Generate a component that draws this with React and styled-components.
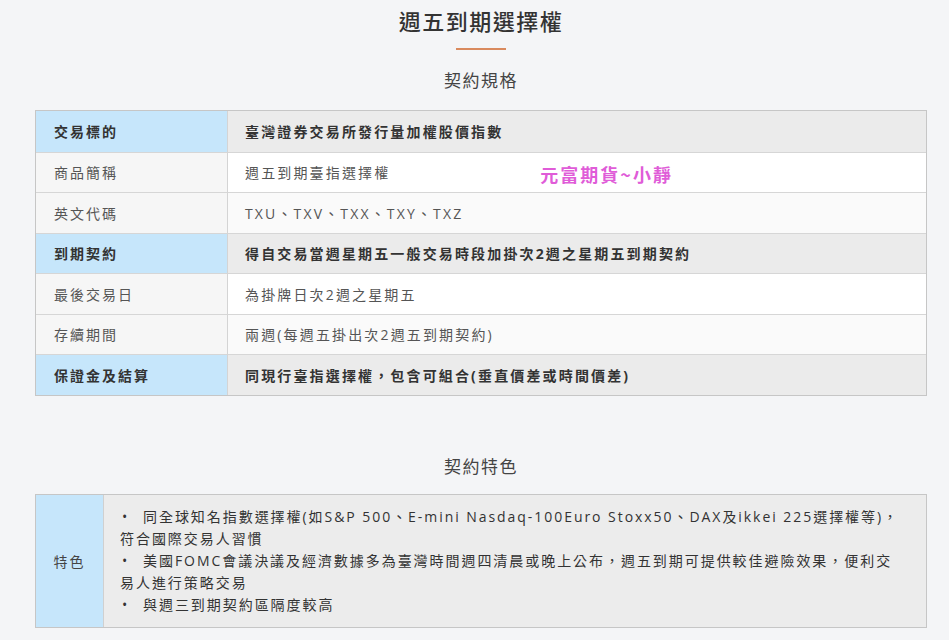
import React from "react"
import styled, { createGlobalStyle } from "styled-components"

const GlobalStyle = createGlobalStyle`
    html, body {
        margin: 0;
        padding: 0;
        background: #f4f5f7;
    }
    body {
        font-family: "Open Sans", "Noto Sans CJK TC", sans-serif;
        color: #333;
    }
`

const Page = styled.div`
    width: 949px;
    height: 640px;
    overflow: hidden;
    padding: 0 22px 0 35px;
    box-sizing: border-box;
    display: flex;
    flex-direction: column;
    align-items: center;
`

const Title = styled.h1`
    margin: 5px 0 0 0;
    font-family: "Noto Sans CJK TC", sans-serif;
    font-size: 22px;
    line-height: 30px;
    font-weight: 500;
    color: #333;
    letter-spacing: 1.5px;
`

const Divider = styled.div`
    width: 50px;
    height: 2px;
    margin: 13px 0 0 0;
    background: #d98a5e;
`

const SectionTitle = styled.h2`
    margin: ${props => props.top} 0 0 0;
    font-family: "Noto Sans CJK TC", sans-serif;
    font-size: 17px;
    line-height: 24px;
    font-weight: 400;
    color: #444;
    letter-spacing: 1.5px;
`

const Table = styled.div`
    width: 892px;
    margin: ${props => props.top} 0 0 0;
    border: 1px solid #c6c6c6;
    box-sizing: border-box;
    display: grid;
    grid-template-columns: ${props => props.cols};
`

const LabelCell = styled.div`
    height: 40.5px;
    box-sizing: border-box;
    padding: 0 0 0 18px;
    display: flex;
    align-items: center;
    background: ${props => props.strong ? "#c6e6fb" : "#f6f6f6"};
    border-right: 1px solid #d4d4d4;
    border-top: ${props => props.first ? "none" : "1px solid #d6d6d6"};
    font-family: "Noto Sans CJK TC", sans-serif;
    font-size: 14px;
    font-weight: ${props => props.strong ? 700 : 400};
    letter-spacing: 2px;
    color: ${props => props.strong ? "#333" : "#555"};
`

const ValueCell = styled.div`
    height: 40.5px;
    box-sizing: border-box;
    padding: 0 0 0 17px;
    display: flex;
    align-items: center;
    background: ${props => props.bg};
    border-top: ${props => props.first ? "none" : "1px solid #d6d6d6"};
    font-family: "Open Sans", "Noto Sans CJK TC", sans-serif;
    font-size: 14px;
    font-weight: ${props => props.strong ? 700 : 400};
    letter-spacing: 2.15px;
    color: ${props => props.strong ? "#333" : "#555"};
`

const Watermark = styled.span`
    margin-left: 150px;
    font-family: "Noto Sans CJK TC", sans-serif;
    font-size: 18px;
    font-weight: 700;
    letter-spacing: 2px;
    color: #e05cd8;
    position: relative;
    top: 2px;
`

const FeatureLabel = styled.div`
    display: flex;
    align-items: center;
    justify-content: center;
    background: #c6e6fb;
    border-right: 1px solid #d0d0d0;
    font-family: "Noto Sans CJK TC", sans-serif;
    font-size: 14px;
    letter-spacing: 2px;
    color: #444;
`

const FeatureBody = styled.ul`
    margin: 0;
    padding: 11px 24px 10px 16px;
    list-style: none;
    background: #ececec;
    font-family: "Open Sans", "Noto Sans CJK TC", sans-serif;
    font-size: 14px;
    line-height: 22.2px;
    letter-spacing: 1.95px;
    color: #333;
`

const FeatureItem = styled.li`
    &::before {
        content: "•";
        display: inline-block;
        width: 23px;
        padding-left: 2px;
        box-sizing: border-box;
        color: #333;
    }
`

const rows = [
    { label: "交易標的", value: "臺灣證券交易所發行量加權股價指數", strong: true },
    { label: "商品簡稱", value: "週五到期臺指選擇權", bg: "#ffffff", mark: true },
    { label: "英文代碼", value: "TXU、TXV、TXX、TXY、TXZ", bg: "#fafafa" },
    { label: "到期契約", value: "得自交易當週星期五一般交易時段加掛次2週之星期五到期契約", strong: true },
    { label: "最後交易日", value: "為掛牌日次2週之星期五", bg: "#ffffff" },
    { label: "存續期間", value: "兩週(每週五掛出次2週五到期契約)", bg: "#fafafa" },
    { label: "保證金及結算", value: "同現行臺指選擇權，包含可組合(垂直價差或時間價差)", strong: true }
]

const features = [
    "同全球知名指數選擇權(如S&P 500、E-mini Nasdaq-100Euro Stoxx50、DAX及ikkei 225選擇權等)，符合國際交易人習慣",
    "美國FOMC會議決議及經濟數據多為臺灣時間週四清晨或晚上公布，週五到期可提供較佳避險效果，便利交易人進行策略交易",
    "與週三到期契約區隔度較高"
]

function App() {
    return (
        <Page lang="zh-TW">
            <GlobalStyle />
            <Title>週五到期選擇權</Title>
            <Divider />
            <SectionTitle top="18px">契約規格</SectionTitle>
            <Table top="18px" cols="192px 1fr">
                {rows.map((row, i) => (
                    <React.Fragment key={row.label}>
                        <LabelCell strong={row.strong} first={i === 0}>{row.label}</LabelCell>
                        <ValueCell strong={row.strong} first={i === 0} bg={row.strong ? "#ebebeb" : row.bg}>
                            {row.value}
                            {row.mark && <Watermark>元富期貨~小靜</Watermark>}
                        </ValueCell>
                    </React.Fragment>
                ))}
            </Table>
            <SectionTitle top="58px">契約特色</SectionTitle>
            <Table top="16px" cols="68px 1fr">
                <FeatureLabel>特色</FeatureLabel>
                <FeatureBody>
                    {features.map(text => (
                        <FeatureItem key={text}>{text}</FeatureItem>
                    ))}
                </FeatureBody>
            </Table>
        </Page>
    )
}

export default App
